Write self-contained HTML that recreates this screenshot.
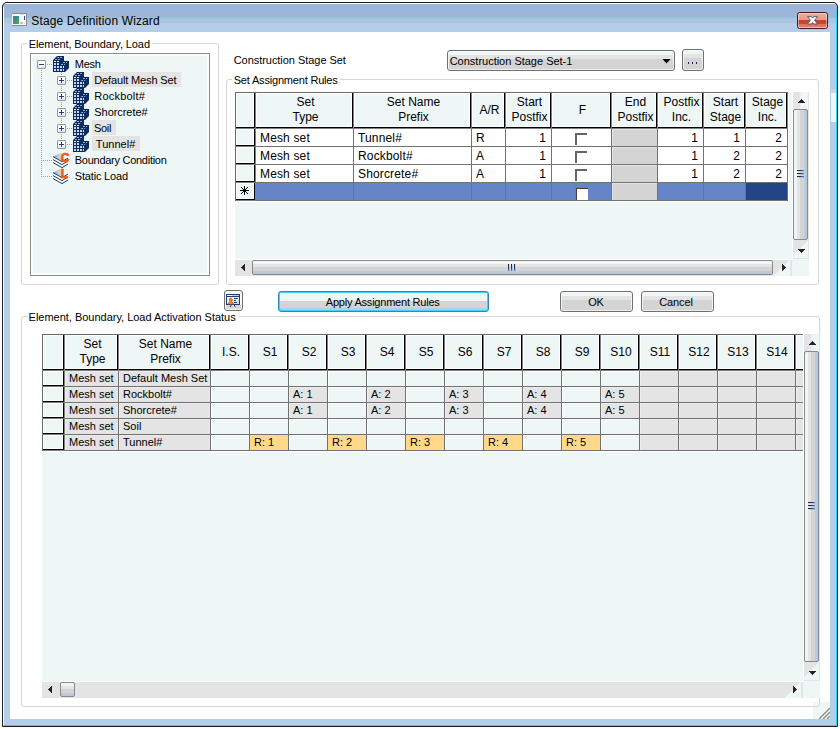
<!DOCTYPE html><html><head><meta charset="utf-8"><title>Stage Definition Wizard</title><style>
html,body{margin:0;padding:0;background:#fff;}
body{width:840px;height:729px;position:relative;overflow:hidden;font-family:"Liberation Sans",sans-serif;font-size:11px;color:#000;}
.a{position:absolute;box-sizing:border-box;}
.t{position:absolute;white-space:nowrap;line-height:13px;letter-spacing:-0.12px;}
.gb{position:absolute;box-sizing:border-box;border:1px solid #d5d5d5;border-radius:3px;}
.gl{position:absolute;background:#fff;padding:0 2px;white-space:nowrap;line-height:13px;letter-spacing:-0.12px;}
.hc,.rh{position:absolute;box-sizing:border-box;background:#eef6f6;border-right:1px solid #808080;border-bottom:1px solid #808080;box-shadow:inset -1px -1px 0 #000,inset 1px 1px 0 #fff,inset -2px -2px 0 #fff;}
.hc{text-align:center;font-size:12px;line-height:15px;white-space:nowrap;overflow:hidden;padding-left:2px;}
.dc{position:absolute;box-sizing:border-box;border-right:1px solid #727272;border-bottom:1px solid #727272;white-space:nowrap;overflow:hidden;}
.u{font-size:12px;line-height:19px;letter-spacing:0.15px;}
.l{font-size:11px;line-height:15px;}
.lw{box-shadow:inset 1px 1px 0 rgba(255,255,255,.8);}
.ug{box-shadow:inset 1px 1px 0 #e4e4e4;}
.lg{box-shadow:inset 1px 1px 0 rgba(255,255,255,.35);}
.btn{position:absolute;box-sizing:border-box;border:1px solid #707070;border-radius:3px;background:linear-gradient(#f8fbfb 0,#f8fbfb 1px,#eef6f6 1px,#eef6f6 4px,#e4e4e4 4px,#e4e4e4 8px,#d4d4d4 8px,#d4d4d4 calc(100% - 1px),#ececec calc(100% - 1px));box-shadow:inset 1px 0 0 #f4f6f6,inset -1px 0 0 #f4f6f6;text-align:center;white-space:nowrap;}
.cb{position:absolute;box-sizing:border-box;width:13px;height:13px;background:#fff;border-top:2px solid #808080;border-left:2px solid #808080;}
</style></head><body>
<div class="a" style="left:2px;top:2px;width:836px;height:725px;background:#1c1c18;border-radius:5px 5px 1px 1px;"></div>
<div class="a" style="left:3px;top:3px;width:834px;height:723px;border-radius:4px 4px 0 0;background:linear-gradient(#fff 0,#fff 1px,#9cb5d9 1px,#9cb5d9 14px,#90c4dc 14px,#90c4dc 15px,#acc5df 15px,#acc5df 20px,#b4cde9 20px,#b4cde9 100%);"></div>
<div class="a" style="left:3px;top:7px;width:1px;height:718px;background:#fff;"></div>
<div class="a" style="left:836px;top:9px;width:1px;height:717px;background:#1fd9fb;"></div>
<div class="a" style="left:4px;top:725px;width:833px;height:1px;background:#1fd9fb;"></div>
<div class="a" style="left:831px;top:89px;width:5px;height:4px;background:#d4d4d4;"></div>
<div class="a" style="left:831px;top:93px;width:5px;height:29px;background:#eef6f6;"></div>
<div class="a" style="left:10px;top:32px;width:820px;height:687px;background:#fff;"></div>
<svg class="a" style="left:12px;top:13px" width="15" height="13" viewBox="0 0 15 13" shape-rendering="crispEdges"><defs><linearGradient id="ai" x1="0" y1="0" x2="1" y2="1"><stop offset="0" stop-color="#4279b4"/><stop offset="0.55" stop-color="#3c9478"/><stop offset="1" stop-color="#46a85c"/></linearGradient></defs><rect x="0" y="0" width="15" height="13" fill="#f7f7f7"/><rect x="0" y="0" width="15" height="1" fill="#8c8c8c"/><rect x="14" y="0" width="1" height="13" fill="#8c8c8c"/><rect x="0" y="12" width="15" height="1" fill="#8c8c8c"/><rect x="8" y="1" width="4" height="1" fill="#e4dcd8"/><rect x="1" y="3" width="6" height="8" fill="url(#ai)"/><rect x="12" y="3" width="1" height="3" fill="#2450b0"/><rect x="12" y="6" width="1" height="1" fill="#3a4a50"/><rect x="8" y="9" width="3" height="2" fill="#c6c6c6"/><rect x="12" y="10" width="1" height="1" fill="#d0d0d0"/></svg>
<div class="t" style="left:31.30px;top:14px;font-size:12px;line-height:15px;letter-spacing:0.136px;">Stage Definition Wizard</div>
<div class="a" style="left:797px;top:12px;width:31px;height:17px;border:1px solid #471820;border-radius:2.5px;background:linear-gradient(#e9a797 0,#e9a797 4px,#eb9c92 4px,#eb9c92 7px,#c3452b 7px,#c6492f 11px,#d6735e 11px,#da7c68 14px,#f0c4b8 14px);box-shadow:inset 1px 0 0 rgba(255,225,215,.55),inset -1px 0 0 rgba(255,225,215,.55),inset 0 1px 0 rgba(255,225,215,.6);"></div>
<svg class="a" style="left:805px;top:14px" width="15" height="13" viewBox="0 0 15 13"><path d="M2.5 2.6 L6.4 2.6 L7.5 4.1 L8.6 2.6 L12.5 2.6 L9.6 6.3 L12.5 10 L8.6 10 L7.5 8.5 L6.4 10 L2.5 10 L5.4 6.3 Z" fill="#fbfbfb" stroke="#4a5468" stroke-width="0.9" stroke-linejoin="round"/></svg>
<div class="gb" style="left:21px;top:43px;width:198px;height:242px;"></div>
<div class="a" style="left:28px;top:42px;width:124px;height:3px;background:#fff;"></div>
<div class="t" style="left:28.70px;top:38px;font-size:11px;line-height:13px;letter-spacing:-0.091px;">Element, Boundary, Load</div>
<div class="a" style="left:30px;top:53px;width:180px;height:223px;background:#eef6f6;border:1px solid #8e8e86;box-shadow:inset 0 0 0 2px #fafdfd;"></div>
<div class="a" style="left:41px;top:70px;width:1px;height:107px;background:repeating-linear-gradient(#a0a0a0 0,#a0a0a0 1px,transparent 1px,transparent 2px);"></div>
<div class="a" style="left:47px;top:64px;width:6px;height:1px;background:repeating-linear-gradient(90deg,#a0a0a0 0,#a0a0a0 1px,transparent 1px,transparent 2px);"></div>
<div class="a" style="left:41px;top:160px;width:12px;height:1px;background:repeating-linear-gradient(90deg,#a0a0a0 0,#a0a0a0 1px,transparent 1px,transparent 2px);"></div>
<div class="a" style="left:41px;top:176px;width:12px;height:1px;background:repeating-linear-gradient(90deg,#a0a0a0 0,#a0a0a0 1px,transparent 1px,transparent 2px);"></div>
<div class="a" style="left:61px;top:72px;width:1px;height:69px;background:repeating-linear-gradient(#a0a0a0 0,#a0a0a0 1px,transparent 1px,transparent 2px);"></div>
<div class="a" style="left:37px;top:60px;width:9px;height:9px;border:1px solid #969696;border-radius:1px;background:linear-gradient(#fff 0,#fff 50%,#e6e6e6 100%);"></div><div class="a" style="left:39px;top:64px;width:5px;height:1px;background:#203a9c;"></div>
<svg class="a" style="left:53px;top:56px" width="16" height="16" viewBox="0 0 16 16" shape-rendering="crispEdges"><polygon points="0,4 4,0 11,0 11,5 16,5 16,12 12,16 0,16" fill="#0f2a5c" shape-rendering="auto"/>
<g fill="#86aee6"><rect x="4" y="1" width="2" height="1"/><rect x="7" y="1" width="2" height="1"/><rect x="2" y="3" width="2" height="1"/><rect x="5" y="3" width="2" height="1"/><rect x="10" y="6" width="2" height="1"/><rect x="13" y="6" width="1" height="1"/><rect x="8" y="8" width="2" height="1"/><rect x="11" y="8" width="1" height="1"/></g>
<g fill="#fff"><rect x="1" y="5" width="2" height="1"/><rect x="4" y="5" width="2" height="1"/><rect x="10" y="10" width="1" height="2"/></g>
<g fill="#bed7f6"><rect x="1" y="7" width="2" height="2"/><rect x="4" y="7" width="2" height="2"/><rect x="1" y="10" width="2" height="2"/><rect x="4" y="10" width="2" height="2"/><rect x="7" y="10" width="2" height="2"/><rect x="1" y="13" width="2" height="2"/><rect x="4" y="13" width="2" height="2"/><rect x="7" y="13" width="2" height="2"/><rect x="10" y="13" width="1" height="2"/></g></svg>
<div class="t" style="left:74.80px;top:58px;font-size:11px;line-height:13px;letter-spacing:-0.267px;">Mesh</div>
<div class="a" style="left:67px;top:80px;width:6px;height:1px;background:repeating-linear-gradient(90deg,#a0a0a0 0,#a0a0a0 1px,transparent 1px,transparent 2px);"></div>
<div class="a" style="left:57px;top:76px;width:9px;height:9px;border:1px solid #969696;border-radius:1px;background:linear-gradient(#fff 0,#fff 50%,#e6e6e6 100%);"></div><div class="a" style="left:59px;top:80px;width:5px;height:1px;background:#203a9c;"></div><div class="a" style="left:61px;top:78px;width:1px;height:5px;background:#203a9c;"></div>
<svg class="a" style="left:73px;top:72px" width="16" height="16" viewBox="0 0 16 16" shape-rendering="crispEdges"><polygon points="0,4 4,0 11,0 11,5 16,5 16,12 12,16 0,16" fill="#0f2a5c" shape-rendering="auto"/>
<g fill="#86aee6"><rect x="4" y="1" width="2" height="1"/><rect x="7" y="1" width="2" height="1"/><rect x="2" y="3" width="2" height="1"/><rect x="5" y="3" width="2" height="1"/><rect x="10" y="6" width="2" height="1"/><rect x="13" y="6" width="1" height="1"/><rect x="8" y="8" width="2" height="1"/><rect x="11" y="8" width="1" height="1"/></g>
<g fill="#fff"><rect x="1" y="5" width="2" height="1"/><rect x="4" y="5" width="2" height="1"/><rect x="10" y="10" width="1" height="2"/></g>
<g fill="#bed7f6"><rect x="1" y="7" width="2" height="2"/><rect x="4" y="7" width="2" height="2"/><rect x="1" y="10" width="2" height="2"/><rect x="4" y="10" width="2" height="2"/><rect x="7" y="10" width="2" height="2"/><rect x="1" y="13" width="2" height="2"/><rect x="4" y="13" width="2" height="2"/><rect x="7" y="13" width="2" height="2"/><rect x="10" y="13" width="1" height="2"/></g></svg>
<div class="a" style="left:92px;top:72px;width:89px;height:15px;background:#e4e4e4;"></div>
<div class="t" style="left:94.30px;top:74px;font-size:11px;line-height:13px;letter-spacing:-0.140px;">Default Mesh Set</div>
<div class="a" style="left:67px;top:96px;width:6px;height:1px;background:repeating-linear-gradient(90deg,#a0a0a0 0,#a0a0a0 1px,transparent 1px,transparent 2px);"></div>
<div class="a" style="left:57px;top:92px;width:9px;height:9px;border:1px solid #969696;border-radius:1px;background:linear-gradient(#fff 0,#fff 50%,#e6e6e6 100%);"></div><div class="a" style="left:59px;top:96px;width:5px;height:1px;background:#203a9c;"></div><div class="a" style="left:61px;top:94px;width:1px;height:5px;background:#203a9c;"></div>
<svg class="a" style="left:73px;top:88px" width="16" height="16" viewBox="0 0 16 16" shape-rendering="crispEdges"><polygon points="0,4 4,0 11,0 11,5 16,5 16,12 12,16 0,16" fill="#0f2a5c" shape-rendering="auto"/>
<g fill="#86aee6"><rect x="4" y="1" width="2" height="1"/><rect x="7" y="1" width="2" height="1"/><rect x="2" y="3" width="2" height="1"/><rect x="5" y="3" width="2" height="1"/><rect x="10" y="6" width="2" height="1"/><rect x="13" y="6" width="1" height="1"/><rect x="8" y="8" width="2" height="1"/><rect x="11" y="8" width="1" height="1"/></g>
<g fill="#fff"><rect x="1" y="5" width="2" height="1"/><rect x="4" y="5" width="2" height="1"/><rect x="10" y="10" width="1" height="2"/></g>
<g fill="#bed7f6"><rect x="1" y="7" width="2" height="2"/><rect x="4" y="7" width="2" height="2"/><rect x="1" y="10" width="2" height="2"/><rect x="4" y="10" width="2" height="2"/><rect x="7" y="10" width="2" height="2"/><rect x="1" y="13" width="2" height="2"/><rect x="4" y="13" width="2" height="2"/><rect x="7" y="13" width="2" height="2"/><rect x="10" y="13" width="1" height="2"/></g></svg>
<div class="t" style="left:94.30px;top:90px;font-size:11px;line-height:13px;letter-spacing:0.213px;">Rockbolt#</div>
<div class="a" style="left:67px;top:112px;width:6px;height:1px;background:repeating-linear-gradient(90deg,#a0a0a0 0,#a0a0a0 1px,transparent 1px,transparent 2px);"></div>
<div class="a" style="left:57px;top:108px;width:9px;height:9px;border:1px solid #969696;border-radius:1px;background:linear-gradient(#fff 0,#fff 50%,#e6e6e6 100%);"></div><div class="a" style="left:59px;top:112px;width:5px;height:1px;background:#203a9c;"></div><div class="a" style="left:61px;top:110px;width:1px;height:5px;background:#203a9c;"></div>
<svg class="a" style="left:73px;top:104px" width="16" height="16" viewBox="0 0 16 16" shape-rendering="crispEdges"><polygon points="0,4 4,0 11,0 11,5 16,5 16,12 12,16 0,16" fill="#0f2a5c" shape-rendering="auto"/>
<g fill="#86aee6"><rect x="4" y="1" width="2" height="1"/><rect x="7" y="1" width="2" height="1"/><rect x="2" y="3" width="2" height="1"/><rect x="5" y="3" width="2" height="1"/><rect x="10" y="6" width="2" height="1"/><rect x="13" y="6" width="1" height="1"/><rect x="8" y="8" width="2" height="1"/><rect x="11" y="8" width="1" height="1"/></g>
<g fill="#fff"><rect x="1" y="5" width="2" height="1"/><rect x="4" y="5" width="2" height="1"/><rect x="10" y="10" width="1" height="2"/></g>
<g fill="#bed7f6"><rect x="1" y="7" width="2" height="2"/><rect x="4" y="7" width="2" height="2"/><rect x="1" y="10" width="2" height="2"/><rect x="4" y="10" width="2" height="2"/><rect x="7" y="10" width="2" height="2"/><rect x="1" y="13" width="2" height="2"/><rect x="4" y="13" width="2" height="2"/><rect x="7" y="13" width="2" height="2"/><rect x="10" y="13" width="1" height="2"/></g></svg>
<div class="t" style="left:94.30px;top:106px;font-size:11px;line-height:13px;letter-spacing:-0.056px;">Shorcrete#</div>
<div class="a" style="left:67px;top:128px;width:6px;height:1px;background:repeating-linear-gradient(90deg,#a0a0a0 0,#a0a0a0 1px,transparent 1px,transparent 2px);"></div>
<div class="a" style="left:57px;top:124px;width:9px;height:9px;border:1px solid #969696;border-radius:1px;background:linear-gradient(#fff 0,#fff 50%,#e6e6e6 100%);"></div><div class="a" style="left:59px;top:128px;width:5px;height:1px;background:#203a9c;"></div><div class="a" style="left:61px;top:126px;width:1px;height:5px;background:#203a9c;"></div>
<svg class="a" style="left:73px;top:120px" width="16" height="16" viewBox="0 0 16 16" shape-rendering="crispEdges"><polygon points="0,4 4,0 11,0 11,5 16,5 16,12 12,16 0,16" fill="#0f2a5c" shape-rendering="auto"/>
<g fill="#86aee6"><rect x="4" y="1" width="2" height="1"/><rect x="7" y="1" width="2" height="1"/><rect x="2" y="3" width="2" height="1"/><rect x="5" y="3" width="2" height="1"/><rect x="10" y="6" width="2" height="1"/><rect x="13" y="6" width="1" height="1"/><rect x="8" y="8" width="2" height="1"/><rect x="11" y="8" width="1" height="1"/></g>
<g fill="#fff"><rect x="1" y="5" width="2" height="1"/><rect x="4" y="5" width="2" height="1"/><rect x="10" y="10" width="1" height="2"/></g>
<g fill="#bed7f6"><rect x="1" y="7" width="2" height="2"/><rect x="4" y="7" width="2" height="2"/><rect x="1" y="10" width="2" height="2"/><rect x="4" y="10" width="2" height="2"/><rect x="7" y="10" width="2" height="2"/><rect x="1" y="13" width="2" height="2"/><rect x="4" y="13" width="2" height="2"/><rect x="7" y="13" width="2" height="2"/><rect x="10" y="13" width="1" height="2"/></g></svg>
<div class="a" style="left:92px;top:120px;width:24px;height:15px;background:#e4e4e4;"></div>
<div class="t" style="left:94.00px;top:122px;font-size:11px;line-height:13px;letter-spacing:-0.300px;">Soil</div>
<div class="a" style="left:67px;top:144px;width:6px;height:1px;background:repeating-linear-gradient(90deg,#a0a0a0 0,#a0a0a0 1px,transparent 1px,transparent 2px);"></div>
<div class="a" style="left:57px;top:140px;width:9px;height:9px;border:1px solid #969696;border-radius:1px;background:linear-gradient(#fff 0,#fff 50%,#e6e6e6 100%);"></div><div class="a" style="left:59px;top:144px;width:5px;height:1px;background:#203a9c;"></div><div class="a" style="left:61px;top:142px;width:1px;height:5px;background:#203a9c;"></div>
<svg class="a" style="left:73px;top:136px" width="16" height="16" viewBox="0 0 16 16" shape-rendering="crispEdges"><polygon points="0,4 4,0 11,0 11,5 16,5 16,12 12,16 0,16" fill="#0f2a5c" shape-rendering="auto"/>
<g fill="#86aee6"><rect x="4" y="1" width="2" height="1"/><rect x="7" y="1" width="2" height="1"/><rect x="2" y="3" width="2" height="1"/><rect x="5" y="3" width="2" height="1"/><rect x="10" y="6" width="2" height="1"/><rect x="13" y="6" width="1" height="1"/><rect x="8" y="8" width="2" height="1"/><rect x="11" y="8" width="1" height="1"/></g>
<g fill="#fff"><rect x="1" y="5" width="2" height="1"/><rect x="4" y="5" width="2" height="1"/><rect x="10" y="10" width="1" height="2"/></g>
<g fill="#bed7f6"><rect x="1" y="7" width="2" height="2"/><rect x="4" y="7" width="2" height="2"/><rect x="1" y="10" width="2" height="2"/><rect x="4" y="10" width="2" height="2"/><rect x="7" y="10" width="2" height="2"/><rect x="1" y="13" width="2" height="2"/><rect x="4" y="13" width="2" height="2"/><rect x="7" y="13" width="2" height="2"/><rect x="10" y="13" width="1" height="2"/></g></svg>
<div class="a" style="left:92px;top:136px;width:48px;height:15px;background:#e4e4e4;"></div>
<div class="t" style="left:95.80px;top:138px;font-size:11px;line-height:13px;letter-spacing:0.033px;">Tunnel#</div>
<svg class="a" style="left:52px;top:152px" width="18" height="17" viewBox="0 0 18 17"><defs><linearGradient id="lgC" x1="0" y1="0" x2="1" y2="0"><stop offset="0" stop-color="#8aa4c6"/><stop offset="0.6" stop-color="#dfe8f2"/><stop offset="1" stop-color="#ffffff"/></linearGradient></defs><polygon points="1,10.5 10,15.5 16,12 16,6 10,9.5 1,4.5" fill="#f4f7fa"/><polygon points="1,4.4 8.3,0.8 16,4.6 10,9.4" fill="url(#lgC)"/><polyline points="1,4.6 10,9.6 16,6.1" fill="none" stroke="#2a3e56" stroke-width="1"/><polyline points="1,7.6 10,12.6 16,9.1" fill="none" stroke="#2a3e56" stroke-width="1"/><polyline points="1,10.6 10,15.6 16,12.1" fill="none" stroke="#2a3e56" stroke-width="1"/><text x="8.7" y="9.8" font-family="Liberation Sans,sans-serif" font-weight="bold" font-size="12" fill="#f25a05" stroke="#f25a05" stroke-width="0.7">C</text></svg>
<div class="t" style="left:74.80px;top:154px;font-size:11px;line-height:13px;letter-spacing:-0.271px;">Boundary Condition</div>
<svg class="a" style="left:52px;top:168px" width="18" height="17" viewBox="0 0 18 17"><defs><linearGradient id="lgL" x1="0" y1="0" x2="1" y2="0"><stop offset="0" stop-color="#8aa4c6"/><stop offset="0.6" stop-color="#dfe8f2"/><stop offset="1" stop-color="#ffffff"/></linearGradient></defs><polygon points="1,10.5 10,15.5 16,12 16,6 10,9.5 1,4.5" fill="#f4f7fa"/><polygon points="1,4.4 8.3,0.8 16,4.6 10,9.4" fill="url(#lgL)"/><polyline points="1,4.6 10,9.6 16,6.1" fill="none" stroke="#2a3e56" stroke-width="1"/><polyline points="1,7.6 10,12.6 16,9.1" fill="none" stroke="#2a3e56" stroke-width="1"/><polyline points="1,10.6 10,15.6 16,12.1" fill="none" stroke="#2a3e56" stroke-width="1"/><text x="8.7" y="9.8" font-family="Liberation Sans,sans-serif" font-weight="bold" font-size="12" fill="#f25a05" stroke="#f25a05" stroke-width="0.7">L</text></svg>
<div class="t" style="left:74.80px;top:170px;font-size:11px;line-height:13px;letter-spacing:-0.180px;">Static Load</div>
<div class="t" style="left:233.70px;top:54px;font-size:11px;line-height:13px;letter-spacing:-0.043px;">Construction Stage Set</div>
<div class="btn" style="left:447px;top:50px;width:228px;height:21px;text-align:left;"></div>
<div class="t" style="left:449.70px;top:55px;font-size:11px;line-height:13px;letter-spacing:-0.009px;">Construction Stage Set-1</div>
<svg class="a" style="left:662px;top:59px" width="9" height="5" viewBox="0 0 9 5"><polygon points="0.5,0 8.5,0 4.5,4.5" fill="#000"/></svg>
<div class="btn" style="left:682px;top:49px;width:22px;height:22px;"></div>
<div class="a" style="left:688px;top:62px;width:1px;height:2px;background:#30205a;"></div>
<div class="a" style="left:692px;top:62px;width:1px;height:2px;background:#30205a;"></div>
<div class="a" style="left:696px;top:62px;width:1px;height:2px;background:#30205a;"></div>
<div class="gb" style="left:226px;top:79px;width:593px;height:206px;"></div>
<div class="a" style="left:232px;top:78px;width:108px;height:3px;background:#fff;"></div>
<div class="t" style="left:233.70px;top:74px;font-size:11px;line-height:13px;letter-spacing:-0.184px;">Set Assignment Rules</div>
<div class="a" style="left:235px;top:92px;width:574px;height:184px;background:#eef6f6;"></div>
<div class="a" style="left:235px;top:92px;width:1px;height:109px;background:#6a6a6a;"></div>
<div class="a" style="left:235px;top:92px;width:553px;height:1px;background:#6a6a6a;"></div>
<div class="a" style="left:788px;top:92px;width:1px;height:110px;background:#fff;"></div>
<div class="a" style="left:235px;top:201px;width:554px;height:1px;background:#fff;"></div>
<div class="a" style="left:792px;top:92px;width:1px;height:168px;background:#fff;"></div>
<div class="a" style="left:235px;top:259px;width:558px;height:1px;background:#fff;"></div>
<div class="hc" style="left:236px;top:93px;width:20px;height:36px;padding-top:10px;"></div>
<div class="hc" style="left:256px;top:93px;width:98px;height:36px;padding-top:2px;">Set<br>Type</div>
<div class="hc" style="left:354px;top:93px;width:118px;height:36px;padding-top:2px;">Set Name<br>Prefix</div>
<div class="hc" style="left:472px;top:93px;width:34px;height:36px;padding-top:10px;">A/R</div>
<div class="hc" style="left:506px;top:93px;width:46px;height:36px;padding-top:2px;">Start<br>Postfix</div>
<div class="hc" style="left:552px;top:93px;width:60px;height:36px;padding-top:10px;">F</div>
<div class="hc" style="left:612px;top:93px;width:46px;height:36px;padding-top:2px;">End<br>Postfix</div>
<div class="hc" style="left:658px;top:93px;width:46px;height:36px;padding-top:2px;">Postfix<br>Inc.</div>
<div class="hc" style="left:704px;top:93px;width:42px;height:36px;padding-top:2px;">Start<br>Stage</div>
<div class="hc" style="left:746px;top:93px;width:42px;height:36px;padding-top:2px;">Stage<br>Inc.</div>
<div class="rh" style="left:236px;top:129px;width:20px;height:18px;"></div>
<div class="dc u" style="left:256px;top:129px;width:98px;height:18px;background:#fff;padding-left:4px;">Mesh set</div>
<div class="dc u" style="left:354px;top:129px;width:118px;height:18px;background:#fff;padding-left:4px;">Tunnel#</div>
<div class="dc u" style="left:472px;top:129px;width:34px;height:18px;background:#fff;padding-left:4px;">R</div>
<div class="dc u" style="left:506px;top:129px;width:46px;height:18px;background:#fff;text-align:right;padding-right:5px;">1</div>
<div class="dc u" style="left:552px;top:129px;width:60px;height:18px;background:#fff;"></div>
<div class="a" style="left:575px;top:133px;width:12px;height:12px;border-top:2px solid #666;border-left:2px solid #666;background:#fff;"></div>
<div class="dc u ug" style="left:612px;top:129px;width:46px;height:18px;background:#d4d4d4;"></div>
<div class="dc u" style="left:658px;top:129px;width:46px;height:18px;background:#fff;text-align:right;padding-right:5px;">1</div>
<div class="dc u" style="left:704px;top:129px;width:42px;height:18px;background:#fff;text-align:right;padding-right:5px;">1</div>
<div class="dc u" style="left:746px;top:129px;width:42px;height:18px;background:#fff;text-align:right;padding-right:5px;">2</div>
<div class="rh" style="left:236px;top:147px;width:20px;height:18px;"></div>
<div class="dc u" style="left:256px;top:147px;width:98px;height:18px;background:#fff;padding-left:4px;">Mesh set</div>
<div class="dc u" style="left:354px;top:147px;width:118px;height:18px;background:#fff;padding-left:4px;">Rockbolt#</div>
<div class="dc u" style="left:472px;top:147px;width:34px;height:18px;background:#fff;padding-left:4px;">A</div>
<div class="dc u" style="left:506px;top:147px;width:46px;height:18px;background:#fff;text-align:right;padding-right:5px;">1</div>
<div class="dc u" style="left:552px;top:147px;width:60px;height:18px;background:#fff;"></div>
<div class="a" style="left:575px;top:151px;width:12px;height:12px;border-top:2px solid #666;border-left:2px solid #666;background:#fff;"></div>
<div class="dc u ug" style="left:612px;top:147px;width:46px;height:18px;background:#d4d4d4;"></div>
<div class="dc u" style="left:658px;top:147px;width:46px;height:18px;background:#fff;text-align:right;padding-right:5px;">1</div>
<div class="dc u" style="left:704px;top:147px;width:42px;height:18px;background:#fff;text-align:right;padding-right:5px;">2</div>
<div class="dc u" style="left:746px;top:147px;width:42px;height:18px;background:#fff;text-align:right;padding-right:5px;">2</div>
<div class="rh" style="left:236px;top:165px;width:20px;height:18px;"></div>
<div class="dc u" style="left:256px;top:165px;width:98px;height:18px;background:#fff;padding-left:4px;">Mesh set</div>
<div class="dc u" style="left:354px;top:165px;width:118px;height:18px;background:#fff;padding-left:4px;">Shorcrete#</div>
<div class="dc u" style="left:472px;top:165px;width:34px;height:18px;background:#fff;padding-left:4px;">A</div>
<div class="dc u" style="left:506px;top:165px;width:46px;height:18px;background:#fff;text-align:right;padding-right:5px;">1</div>
<div class="dc u" style="left:552px;top:165px;width:60px;height:18px;background:#fff;"></div>
<div class="a" style="left:575px;top:169px;width:12px;height:12px;border-top:2px solid #666;border-left:2px solid #666;background:#fff;"></div>
<div class="dc u ug" style="left:612px;top:165px;width:46px;height:18px;background:#d4d4d4;"></div>
<div class="dc u" style="left:658px;top:165px;width:46px;height:18px;background:#fff;text-align:right;padding-right:5px;">1</div>
<div class="dc u" style="left:704px;top:165px;width:42px;height:18px;background:#fff;text-align:right;padding-right:5px;">2</div>
<div class="dc u" style="left:746px;top:165px;width:42px;height:18px;background:#fff;text-align:right;padding-right:5px;">2</div>
<div class="rh" style="left:236px;top:183px;width:20px;height:18px;"></div>
<div class="dc u" style="left:256px;top:183px;width:98px;height:18px;background:#6685c8;"></div>
<div class="dc u" style="left:354px;top:183px;width:118px;height:18px;background:#6685c8;"></div>
<div class="dc u" style="left:472px;top:183px;width:34px;height:18px;background:#6685c8;"></div>
<div class="dc u" style="left:506px;top:183px;width:46px;height:18px;background:#6685c8;"></div>
<div class="dc u" style="left:552px;top:183px;width:60px;height:18px;background:#6685c8;"></div>
<div class="a" style="left:575px;top:187px;width:13px;height:13px;border-top:1px solid #808080;border-left:1px solid #808080;background:#fff;box-shadow:inset 1px 1px 0 #404040;"></div>
<div class="dc u ug" style="left:612px;top:183px;width:46px;height:18px;background:#d4d4d4;"></div>
<div class="dc u" style="left:658px;top:183px;width:46px;height:18px;background:#6685c8;"></div>
<div class="dc u" style="left:704px;top:183px;width:42px;height:18px;background:#6685c8;"></div>
<div class="dc u" style="left:746px;top:183px;width:42px;height:18px;background:#244488;"></div>
<svg class="a" style="left:240px;top:186px" width="9" height="9" viewBox="0 0 9 9" shape-rendering="crispEdges"><g fill="#000"><rect x="0" y="4" width="9" height="1"/><rect x="4" y="0" width="1" height="9"/><rect x="3" y="3" width="3" height="3"/><rect x="1" y="1" width="1" height="1"/><rect x="2" y="2" width="1" height="1"/><rect x="6" y="6" width="1" height="1"/><rect x="7" y="7" width="1" height="1"/><rect x="7" y="1" width="1" height="1"/><rect x="6" y="2" width="1" height="1"/><rect x="2" y="6" width="1" height="1"/><rect x="1" y="7" width="1" height="1"/></g></svg>
<div class="a" style="left:792px;top:92px;width:17px;height:167px;background:linear-gradient(90deg,#fff 0,#fff 1px,#e4e4e4 1px,#e4e4e4 8px,#ecf0f0 8px,#ecf0f0 9px,#eef6f6 9px,#eef6f6 16px,#e4e4e4 16px);"></div><div class="a" style="left:793px;top:240px;width:15px;height:18px;background:linear-gradient(135deg,#e4e4e4 0,#e4e4e4 48%,#eef6f6 48%);border-right:1px solid #e4e4e4;border-bottom:1px solid #e4e4e4;box-sizing:content-box;"></div><svg class="a" style="left:798px;top:99px" width="7" height="4" viewBox="0 0 7 4" shape-rendering="crispEdges"><g fill="#26262e"><rect x="0" y="3" width="7" height="1"/><rect x="1" y="2" width="5" height="1"/><rect x="2" y="1" width="3" height="1"/><rect x="3" y="0" width="1" height="1"/></g></svg><svg class="a" style="left:798px;top:249px" width="7" height="4" viewBox="0 0 7 4" shape-rendering="crispEdges"><g fill="#26262e"><rect x="0" y="0" width="7" height="1"/><rect x="1" y="1" width="5" height="1"/><rect x="2" y="2" width="3" height="1"/><rect x="3" y="3" width="1" height="1"/></g></svg><div class="a" style="left:793px;top:109px;width:15px;height:131px;border:1px solid #8a8a8a;border-radius:2px;background:linear-gradient(90deg,#eef6f6 0,#eef6f6 3px,#e4e4e4 3px,#e4e4e4 6px,#d4d4d4 6px,#d4d4d4 10px,#b4cce8 10px,#b4cce8 12px,#c4c4c4 12px);"></div><div class="a" style="left:797px;top:170px;width:7px;height:1px;background:linear-gradient(90deg,#202020,#2c3850 55%,#6a88c0);"></div><div class="a" style="left:798px;top:171px;width:6px;height:1px;background:linear-gradient(90deg,#c8d8ee,#9ab8e6);"></div><div class="a" style="left:797px;top:173px;width:7px;height:1px;background:linear-gradient(90deg,#202020,#2c3850 55%,#6a88c0);"></div><div class="a" style="left:798px;top:174px;width:6px;height:1px;background:linear-gradient(90deg,#c8d8ee,#9ab8e6);"></div><div class="a" style="left:797px;top:176px;width:7px;height:1px;background:linear-gradient(90deg,#202020,#2c3850 55%,#6a88c0);"></div><div class="a" style="left:798px;top:177px;width:6px;height:1px;background:linear-gradient(90deg,#c8d8ee,#9ab8e6);"></div>
<div class="a" style="left:235px;top:260px;width:557px;height:16px;background:#e4e4e4;"></div><div class="a" style="left:773px;top:260px;width:17px;height:16px;background:linear-gradient(135deg,#e4e4e4 0,#e4e4e4 50%,#eef6f6 50%);"></div><svg class="a" style="left:241px;top:264px" width="4" height="7" viewBox="0 0 4 7" shape-rendering="crispEdges"><g fill="#26262e"><rect x="3" y="0" width="1" height="7"/><rect x="2" y="1" width="1" height="5"/><rect x="1" y="2" width="1" height="3"/><rect x="0" y="3" width="1" height="1"/></g></svg><svg class="a" style="left:782px;top:264px" width="4" height="7" viewBox="0 0 4 7" shape-rendering="crispEdges"><g fill="#26262e"><rect x="0" y="0" width="1" height="7"/><rect x="1" y="1" width="1" height="5"/><rect x="2" y="2" width="1" height="3"/><rect x="3" y="3" width="1" height="1"/></g></svg><div class="a" style="left:252px;top:260px;width:521px;height:15px;border:1px solid #8a8a8a;border-radius:2px;background:linear-gradient(#eef6f6 0,#eef6f6 3px,#e4e4e4 3px,#e4e4e4 6px,#d4d4d4 6px,#d4d4d4 10px,#b4cce8 10px,#b4cce8 12px,#c4c4c4 12px);"></div><div class="a" style="left:508px;top:264px;width:1px;height:7px;background:linear-gradient(#202020,#2c3850 55%,#6a88c0);"></div><div class="a" style="left:509px;top:265px;width:1px;height:6px;background:linear-gradient(#c8d8ee,#9ab8e6);"></div><div class="a" style="left:511px;top:264px;width:1px;height:7px;background:linear-gradient(#202020,#2c3850 55%,#6a88c0);"></div><div class="a" style="left:512px;top:265px;width:1px;height:6px;background:linear-gradient(#c8d8ee,#9ab8e6);"></div><div class="a" style="left:514px;top:264px;width:1px;height:7px;background:linear-gradient(#202020,#2c3850 55%,#6a88c0);"></div><div class="a" style="left:515px;top:265px;width:1px;height:6px;background:linear-gradient(#c8d8ee,#9ab8e6);"></div>
<div class="btn" style="left:224px;top:290px;width:19px;height:21px;background:linear-gradient(#fbfdfd 0,#fbfdfd 14px,#d8d8d8 14px,#d8d8d8 18px,#f4f4f4 18px);"></div>
<svg class="a" style="left:226px;top:294px" width="14" height="14" viewBox="0 0 14 14"><defs><linearGradient id="scr" x1="0" y1="0" x2="1" y2="1"><stop offset="0" stop-color="#ffffff"/><stop offset="1" stop-color="#c4d8f2"/></linearGradient></defs><rect x="0" y="0" width="14" height="11" fill="#1c3c6e"/><rect x="1" y="3" width="12" height="7" fill="url(#scr)"/><rect x="1" y="1" width="5" height="1" fill="#fff"/><rect x="6" y="1" width="7" height="1" fill="#b5cdee"/><path d="M1.8 10 L3.4 8 L6.2 8 L7.8 10Z" fill="#f4b030" stroke="#dc4a0c" stroke-width="0.8"/><circle cx="4.8" cy="5.8" r="1.5" fill="#f6a21a" stroke="#dc4a0c" stroke-width="0.9"/><rect x="8" y="4" width="3.7" height="1" fill="#1c3c6e"/><rect x="8" y="6" width="2" height="1" fill="#1c3c6e"/><rect x="8" y="8" width="3" height="1" fill="#1c3c6e"/><path d="M5.3 11 L4.2 13 M8.2 11 L9.3 13" stroke="#1c3c6e" stroke-width="1" fill="none"/></svg>
<div class="a" style="left:278px;top:291px;width:211px;height:21px;border:1px solid #2e86c8;border-radius:3px;background:linear-gradient(#40d0f8 0,#40d0f8 1px,#eef6f6 1px,#eef6f6 9px,#d4d4d4 9px,#d4d4d4 16.5px,#b0cfeb 16.5px,#b0cfeb 18px,#40d0f8 18px);box-shadow:inset 1px 0 0 #40d0f8,inset -1px 0 0 #40d0f8;"></div>
<div class="t" style="left:325.80px;top:296px;font-size:11px;line-height:13px;letter-spacing:-0.219px;">Apply Assignment Rules</div>
<div class="btn" style="left:560px;top:291px;width:73px;height:21px;"></div>
<div class="t" style="left:588.35px;top:296px;font-size:11px;line-height:13px;letter-spacing:-0.300px;">OK</div>
<div class="btn" style="left:641px;top:291px;width:73px;height:21px;"></div>
<div class="t" style="left:659.30px;top:296px;font-size:11px;line-height:13px;letter-spacing:-0.120px;">Cancel</div>
<div class="a" style="left:813px;top:702px;width:17px;height:17px;background:#eef6f6;"></div>
<svg class="a" style="left:816px;top:705px" width="14" height="14" viewBox="0 0 14 14"><path d="M14 1.6 L1.6 14 M14 5.6 L5.6 14 M14 9.6 L9.6 14" stroke="#fff" stroke-width="1.4" fill="none"/><path d="M14 3 L3 14 M14 7 L7 14 M14 11 L11 14" stroke="#8e8e80" stroke-width="1.5" fill="none"/></svg>
<div class="gb" style="left:21px;top:316px;width:799px;height:391px;box-shadow:inset -1px 0 0 #fff;"></div>
<div class="a" style="left:28px;top:315px;width:211px;height:3px;background:#fff;"></div>
<div class="t" style="left:28.60px;top:311px;font-size:11px;line-height:13px;letter-spacing:-0.015px;">Element, Boundary, Load Activation Status</div>
<div class="a" style="left:42px;top:334px;width:778px;height:364px;background:#eef6f6;"></div>
<div class="a" style="left:42px;top:334px;width:1px;height:117px;background:#6a6a6a;"></div>
<div class="a" style="left:42px;top:334px;width:761px;height:1px;background:#6a6a6a;"></div>
<div class="a" style="left:42px;top:451px;width:761px;height:1px;background:#fff;"></div>
<div class="a" style="left:803px;top:334px;width:1px;height:348px;background:#fff;"></div>
<div class="a" style="left:42px;top:681px;width:762px;height:1px;background:#fff;"></div>
<div class="a" style="left:0px;top:335px;width:803px;height:120px;overflow:hidden;">
<div class="hc" style="left:43px;top:0px;width:22px;height:36px;padding-top:10px;"></div>
<div class="hc" style="left:65px;top:0px;width:54px;height:36px;padding-top:2px;">Set<br>Type</div>
<div class="hc" style="left:119px;top:0px;width:92px;height:36px;padding-top:2px;">Set Name<br>Prefix</div>
<div class="hc" style="left:211px;top:0px;width:39px;height:36px;padding-top:10px;">I.S.</div>
<div class="hc" style="left:250px;top:0px;width:39px;height:36px;padding-top:10px;">S1</div>
<div class="hc" style="left:289px;top:0px;width:39px;height:36px;padding-top:10px;">S2</div>
<div class="hc" style="left:328px;top:0px;width:39px;height:36px;padding-top:10px;">S3</div>
<div class="hc" style="left:367px;top:0px;width:39px;height:36px;padding-top:10px;">S4</div>
<div class="hc" style="left:406px;top:0px;width:39px;height:36px;padding-top:10px;">S5</div>
<div class="hc" style="left:445px;top:0px;width:39px;height:36px;padding-top:10px;">S6</div>
<div class="hc" style="left:484px;top:0px;width:39px;height:36px;padding-top:10px;">S7</div>
<div class="hc" style="left:523px;top:0px;width:39px;height:36px;padding-top:10px;">S8</div>
<div class="hc" style="left:562px;top:0px;width:39px;height:36px;padding-top:10px;">S9</div>
<div class="hc" style="left:601px;top:0px;width:39px;height:36px;padding-top:10px;">S10</div>
<div class="hc" style="left:640px;top:0px;width:39px;height:36px;padding-top:10px;">S11</div>
<div class="hc" style="left:679px;top:0px;width:39px;height:36px;padding-top:10px;">S12</div>
<div class="hc" style="left:718px;top:0px;width:39px;height:36px;padding-top:10px;">S13</div>
<div class="hc" style="left:757px;top:0px;width:39px;height:36px;padding-top:10px;">S14</div>
<div class="hc" style="left:796px;top:0px;width:39px;height:36px;padding-top:10px;">S15</div>
<div class="rh" style="left:43px;top:36px;width:22px;height:16px;"></div>
<div class="dc l lg" style="left:65px;top:36px;width:54px;height:16px;background:#e4e4e4;padding-left:4px;">Mesh set</div>
<div class="dc l lg" style="left:119px;top:36px;width:92px;height:16px;background:#e4e4e4;padding-left:4px;">Default Mesh Set</div>
<div class="dc l lw" style="left:211px;top:36px;width:39px;height:16px;background:#eef6f6;padding-left:4px;"></div>
<div class="dc l lw" style="left:250px;top:36px;width:39px;height:16px;background:#eef6f6;padding-left:4px;"></div>
<div class="dc l lw" style="left:289px;top:36px;width:39px;height:16px;background:#eef6f6;padding-left:4px;"></div>
<div class="dc l lw" style="left:328px;top:36px;width:39px;height:16px;background:#eef6f6;padding-left:4px;"></div>
<div class="dc l lw" style="left:367px;top:36px;width:39px;height:16px;background:#eef6f6;padding-left:4px;"></div>
<div class="dc l lw" style="left:406px;top:36px;width:39px;height:16px;background:#eef6f6;padding-left:4px;"></div>
<div class="dc l lw" style="left:445px;top:36px;width:39px;height:16px;background:#eef6f6;padding-left:4px;"></div>
<div class="dc l lw" style="left:484px;top:36px;width:39px;height:16px;background:#eef6f6;padding-left:4px;"></div>
<div class="dc l lw" style="left:523px;top:36px;width:39px;height:16px;background:#eef6f6;padding-left:4px;"></div>
<div class="dc l lw" style="left:562px;top:36px;width:39px;height:16px;background:#eef6f6;padding-left:4px;"></div>
<div class="dc l lw" style="left:601px;top:36px;width:39px;height:16px;background:#eef6f6;padding-left:4px;"></div>
<div class="dc l lg" style="left:640px;top:36px;width:39px;height:16px;background:#e4e4e4;padding-left:4px;"></div>
<div class="dc l lg" style="left:679px;top:36px;width:39px;height:16px;background:#e4e4e4;padding-left:4px;"></div>
<div class="dc l lg" style="left:718px;top:36px;width:39px;height:16px;background:#e4e4e4;padding-left:4px;"></div>
<div class="dc l lg" style="left:757px;top:36px;width:39px;height:16px;background:#e4e4e4;padding-left:4px;"></div>
<div class="dc l lg" style="left:796px;top:36px;width:39px;height:16px;background:#e4e4e4;padding-left:4px;"></div>
<div class="rh" style="left:43px;top:52px;width:22px;height:16px;"></div>
<div class="dc l lg" style="left:65px;top:52px;width:54px;height:16px;background:#e4e4e4;padding-left:4px;">Mesh set</div>
<div class="dc l lg" style="left:119px;top:52px;width:92px;height:16px;background:#e4e4e4;padding-left:4px;">Rockbolt#</div>
<div class="dc l lw" style="left:211px;top:52px;width:39px;height:16px;background:#eef6f6;padding-left:4px;"></div>
<div class="dc l lw" style="left:250px;top:52px;width:39px;height:16px;background:#eef6f6;padding-left:4px;"></div>
<div class="dc l lg" style="left:289px;top:52px;width:39px;height:16px;background:#e4e4e4;padding-left:4px;">A: 1</div>
<div class="dc l lw" style="left:328px;top:52px;width:39px;height:16px;background:#eef6f6;padding-left:4px;"></div>
<div class="dc l lg" style="left:367px;top:52px;width:39px;height:16px;background:#e4e4e4;padding-left:4px;">A: 2</div>
<div class="dc l lw" style="left:406px;top:52px;width:39px;height:16px;background:#eef6f6;padding-left:4px;"></div>
<div class="dc l lg" style="left:445px;top:52px;width:39px;height:16px;background:#e4e4e4;padding-left:4px;">A: 3</div>
<div class="dc l lw" style="left:484px;top:52px;width:39px;height:16px;background:#eef6f6;padding-left:4px;"></div>
<div class="dc l lg" style="left:523px;top:52px;width:39px;height:16px;background:#e4e4e4;padding-left:4px;">A: 4</div>
<div class="dc l lw" style="left:562px;top:52px;width:39px;height:16px;background:#eef6f6;padding-left:4px;"></div>
<div class="dc l lg" style="left:601px;top:52px;width:39px;height:16px;background:#e4e4e4;padding-left:4px;">A: 5</div>
<div class="dc l lg" style="left:640px;top:52px;width:39px;height:16px;background:#e4e4e4;padding-left:4px;"></div>
<div class="dc l lg" style="left:679px;top:52px;width:39px;height:16px;background:#e4e4e4;padding-left:4px;"></div>
<div class="dc l lg" style="left:718px;top:52px;width:39px;height:16px;background:#e4e4e4;padding-left:4px;"></div>
<div class="dc l lg" style="left:757px;top:52px;width:39px;height:16px;background:#e4e4e4;padding-left:4px;"></div>
<div class="dc l lg" style="left:796px;top:52px;width:39px;height:16px;background:#e4e4e4;padding-left:4px;"></div>
<div class="rh" style="left:43px;top:68px;width:22px;height:16px;"></div>
<div class="dc l lg" style="left:65px;top:68px;width:54px;height:16px;background:#e4e4e4;padding-left:4px;">Mesh set</div>
<div class="dc l lg" style="left:119px;top:68px;width:92px;height:16px;background:#e4e4e4;padding-left:4px;">Shorcrete#</div>
<div class="dc l lw" style="left:211px;top:68px;width:39px;height:16px;background:#eef6f6;padding-left:4px;"></div>
<div class="dc l lw" style="left:250px;top:68px;width:39px;height:16px;background:#eef6f6;padding-left:4px;"></div>
<div class="dc l lg" style="left:289px;top:68px;width:39px;height:16px;background:#e4e4e4;padding-left:4px;">A: 1</div>
<div class="dc l lw" style="left:328px;top:68px;width:39px;height:16px;background:#eef6f6;padding-left:4px;"></div>
<div class="dc l lg" style="left:367px;top:68px;width:39px;height:16px;background:#e4e4e4;padding-left:4px;">A: 2</div>
<div class="dc l lw" style="left:406px;top:68px;width:39px;height:16px;background:#eef6f6;padding-left:4px;"></div>
<div class="dc l lg" style="left:445px;top:68px;width:39px;height:16px;background:#e4e4e4;padding-left:4px;">A: 3</div>
<div class="dc l lw" style="left:484px;top:68px;width:39px;height:16px;background:#eef6f6;padding-left:4px;"></div>
<div class="dc l lg" style="left:523px;top:68px;width:39px;height:16px;background:#e4e4e4;padding-left:4px;">A: 4</div>
<div class="dc l lw" style="left:562px;top:68px;width:39px;height:16px;background:#eef6f6;padding-left:4px;"></div>
<div class="dc l lg" style="left:601px;top:68px;width:39px;height:16px;background:#e4e4e4;padding-left:4px;">A: 5</div>
<div class="dc l lg" style="left:640px;top:68px;width:39px;height:16px;background:#e4e4e4;padding-left:4px;"></div>
<div class="dc l lg" style="left:679px;top:68px;width:39px;height:16px;background:#e4e4e4;padding-left:4px;"></div>
<div class="dc l lg" style="left:718px;top:68px;width:39px;height:16px;background:#e4e4e4;padding-left:4px;"></div>
<div class="dc l lg" style="left:757px;top:68px;width:39px;height:16px;background:#e4e4e4;padding-left:4px;"></div>
<div class="dc l lg" style="left:796px;top:68px;width:39px;height:16px;background:#e4e4e4;padding-left:4px;"></div>
<div class="rh" style="left:43px;top:84px;width:22px;height:16px;"></div>
<div class="dc l lg" style="left:65px;top:84px;width:54px;height:16px;background:#e4e4e4;padding-left:4px;">Mesh set</div>
<div class="dc l lg" style="left:119px;top:84px;width:92px;height:16px;background:#e4e4e4;padding-left:4px;">Soil</div>
<div class="dc l lw" style="left:211px;top:84px;width:39px;height:16px;background:#eef6f6;padding-left:4px;"></div>
<div class="dc l lw" style="left:250px;top:84px;width:39px;height:16px;background:#eef6f6;padding-left:4px;"></div>
<div class="dc l lw" style="left:289px;top:84px;width:39px;height:16px;background:#eef6f6;padding-left:4px;"></div>
<div class="dc l lw" style="left:328px;top:84px;width:39px;height:16px;background:#eef6f6;padding-left:4px;"></div>
<div class="dc l lw" style="left:367px;top:84px;width:39px;height:16px;background:#eef6f6;padding-left:4px;"></div>
<div class="dc l lw" style="left:406px;top:84px;width:39px;height:16px;background:#eef6f6;padding-left:4px;"></div>
<div class="dc l lw" style="left:445px;top:84px;width:39px;height:16px;background:#eef6f6;padding-left:4px;"></div>
<div class="dc l lw" style="left:484px;top:84px;width:39px;height:16px;background:#eef6f6;padding-left:4px;"></div>
<div class="dc l lw" style="left:523px;top:84px;width:39px;height:16px;background:#eef6f6;padding-left:4px;"></div>
<div class="dc l lw" style="left:562px;top:84px;width:39px;height:16px;background:#eef6f6;padding-left:4px;"></div>
<div class="dc l lw" style="left:601px;top:84px;width:39px;height:16px;background:#eef6f6;padding-left:4px;"></div>
<div class="dc l lg" style="left:640px;top:84px;width:39px;height:16px;background:#e4e4e4;padding-left:4px;"></div>
<div class="dc l lg" style="left:679px;top:84px;width:39px;height:16px;background:#e4e4e4;padding-left:4px;"></div>
<div class="dc l lg" style="left:718px;top:84px;width:39px;height:16px;background:#e4e4e4;padding-left:4px;"></div>
<div class="dc l lg" style="left:757px;top:84px;width:39px;height:16px;background:#e4e4e4;padding-left:4px;"></div>
<div class="dc l lg" style="left:796px;top:84px;width:39px;height:16px;background:#e4e4e4;padding-left:4px;"></div>
<div class="rh" style="left:43px;top:100px;width:22px;height:16px;"></div>
<div class="dc l lg" style="left:65px;top:100px;width:54px;height:16px;background:#e4e4e4;padding-left:4px;">Mesh set</div>
<div class="dc l lg" style="left:119px;top:100px;width:92px;height:16px;background:#e4e4e4;padding-left:4px;">Tunnel#</div>
<div class="dc l lw" style="left:211px;top:100px;width:39px;height:16px;background:#eef6f6;padding-left:4px;"></div>
<div class="dc l " style="left:250px;top:100px;width:39px;height:16px;background:#ffd98a;padding-left:4px;">R: 1</div>
<div class="dc l lw" style="left:289px;top:100px;width:39px;height:16px;background:#eef6f6;padding-left:4px;"></div>
<div class="dc l " style="left:328px;top:100px;width:39px;height:16px;background:#ffd98a;padding-left:4px;">R: 2</div>
<div class="dc l lw" style="left:367px;top:100px;width:39px;height:16px;background:#eef6f6;padding-left:4px;"></div>
<div class="dc l " style="left:406px;top:100px;width:39px;height:16px;background:#ffd98a;padding-left:4px;">R: 3</div>
<div class="dc l lw" style="left:445px;top:100px;width:39px;height:16px;background:#eef6f6;padding-left:4px;"></div>
<div class="dc l " style="left:484px;top:100px;width:39px;height:16px;background:#ffd98a;padding-left:4px;">R: 4</div>
<div class="dc l lw" style="left:523px;top:100px;width:39px;height:16px;background:#eef6f6;padding-left:4px;"></div>
<div class="dc l " style="left:562px;top:100px;width:39px;height:16px;background:#ffd98a;padding-left:4px;">R: 5</div>
<div class="dc l lw" style="left:601px;top:100px;width:39px;height:16px;background:#eef6f6;padding-left:4px;"></div>
<div class="dc l lg" style="left:640px;top:100px;width:39px;height:16px;background:#e4e4e4;padding-left:4px;"></div>
<div class="dc l lg" style="left:679px;top:100px;width:39px;height:16px;background:#e4e4e4;padding-left:4px;"></div>
<div class="dc l lg" style="left:718px;top:100px;width:39px;height:16px;background:#e4e4e4;padding-left:4px;"></div>
<div class="dc l lg" style="left:757px;top:100px;width:39px;height:16px;background:#e4e4e4;padding-left:4px;"></div>
<div class="dc l lg" style="left:796px;top:100px;width:39px;height:16px;background:#e4e4e4;padding-left:4px;"></div>
</div>
<div class="a" style="left:803px;top:334px;width:17px;height:347px;background:linear-gradient(90deg,#fff 0,#fff 1px,#e4e4e4 1px,#e4e4e4 8px,#ecf0f0 8px,#ecf0f0 9px,#eef6f6 9px,#eef6f6 16px,#e4e4e4 16px);"></div><div class="a" style="left:804px;top:662px;width:15px;height:18px;background:linear-gradient(135deg,#e4e4e4 0,#e4e4e4 48%,#eef6f6 48%);border-right:1px solid #e4e4e4;border-bottom:1px solid #e4e4e4;box-sizing:content-box;"></div><svg class="a" style="left:809px;top:341px" width="7" height="4" viewBox="0 0 7 4" shape-rendering="crispEdges"><g fill="#26262e"><rect x="0" y="3" width="7" height="1"/><rect x="1" y="2" width="5" height="1"/><rect x="2" y="1" width="3" height="1"/><rect x="3" y="0" width="1" height="1"/></g></svg><svg class="a" style="left:809px;top:671px" width="7" height="4" viewBox="0 0 7 4" shape-rendering="crispEdges"><g fill="#26262e"><rect x="0" y="0" width="7" height="1"/><rect x="1" y="1" width="5" height="1"/><rect x="2" y="2" width="3" height="1"/><rect x="3" y="3" width="1" height="1"/></g></svg><div class="a" style="left:804px;top:351px;width:15px;height:311px;border:1px solid #8a8a8a;border-radius:2px;background:linear-gradient(90deg,#eef6f6 0,#eef6f6 3px,#e4e4e4 3px,#e4e4e4 6px,#d4d4d4 6px,#d4d4d4 10px,#b4cce8 10px,#b4cce8 12px,#c4c4c4 12px);"></div><div class="a" style="left:808px;top:502px;width:7px;height:1px;background:linear-gradient(90deg,#202020,#2c3850 55%,#6a88c0);"></div><div class="a" style="left:809px;top:503px;width:6px;height:1px;background:linear-gradient(90deg,#c8d8ee,#9ab8e6);"></div><div class="a" style="left:808px;top:505px;width:7px;height:1px;background:linear-gradient(90deg,#202020,#2c3850 55%,#6a88c0);"></div><div class="a" style="left:809px;top:506px;width:6px;height:1px;background:linear-gradient(90deg,#c8d8ee,#9ab8e6);"></div><div class="a" style="left:808px;top:508px;width:7px;height:1px;background:linear-gradient(90deg,#202020,#2c3850 55%,#6a88c0);"></div><div class="a" style="left:809px;top:509px;width:6px;height:1px;background:linear-gradient(90deg,#c8d8ee,#9ab8e6);"></div>
<div class="a" style="left:42px;top:682px;width:761px;height:16px;background:#e4e4e4;"></div><div class="a" style="left:784px;top:682px;width:17px;height:16px;background:linear-gradient(135deg,#e4e4e4 0,#e4e4e4 50%,#eef6f6 50%);"></div><svg class="a" style="left:48px;top:686px" width="4" height="7" viewBox="0 0 4 7" shape-rendering="crispEdges"><g fill="#26262e"><rect x="3" y="0" width="1" height="7"/><rect x="2" y="1" width="1" height="5"/><rect x="1" y="2" width="1" height="3"/><rect x="0" y="3" width="1" height="1"/></g></svg><svg class="a" style="left:793px;top:686px" width="4" height="7" viewBox="0 0 4 7" shape-rendering="crispEdges"><g fill="#26262e"><rect x="0" y="0" width="1" height="7"/><rect x="1" y="1" width="1" height="5"/><rect x="2" y="2" width="1" height="3"/><rect x="3" y="3" width="1" height="1"/></g></svg><div class="a" style="left:60px;top:682px;width:15px;height:15px;border:1px solid #8a8a8a;border-radius:2px;background:linear-gradient(#eef6f6 0,#eef6f6 3px,#e4e4e4 3px,#e4e4e4 6px,#d4d4d4 6px,#d4d4d4 10px,#b4cce8 10px,#b4cce8 12px,#c4c4c4 12px);"></div>
</body></html>
